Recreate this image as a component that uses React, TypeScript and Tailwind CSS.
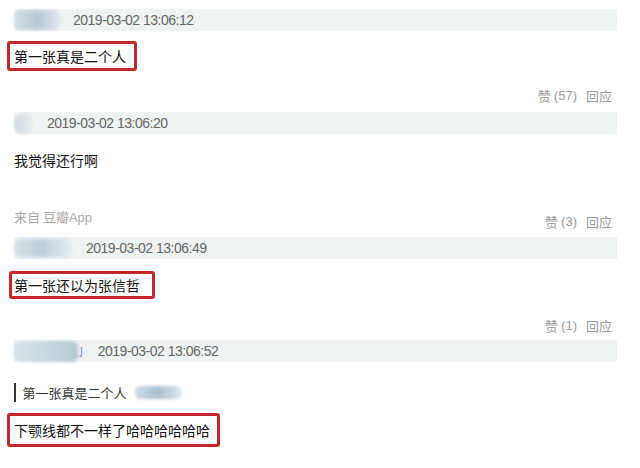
import { FC, ReactNode } from 'react';

const cjk = { fontFamily: '"Noto Sans CJK SC", "Liberation Sans", sans-serif' };
const latin = { fontFamily: '"Liberation Sans", "Noto Sans CJK SC", sans-serif' };

const Blur: FC<{ className: string }> = ({ className }) => (
  <div className={`blur-[1.5px] rounded-[6px] ${className}`} />
);

const Bar: FC<{ children: ReactNode; mt: string }> = ({ children, mt }) => (
  <div className={`flex items-center h-[22px] w-[603px] bg-[#eff3f2] ${mt}`}>{children}</div>
);

const Date: FC<{ text: string; ml: string }> = ({ text, ml }) => (
  <span style={latin} className={`text-[14px] tracking-[-0.5px] text-[#666] ${ml}`}>
    {text}
  </span>
);

const Actions: FC<{ n: number; className?: string }> = ({ n, className }) => (
  <div style={cjk} className={`flex justify-end w-[598px] text-[13px] leading-[18px] text-[#999] ${className ?? ''}`}>
    <span>赞</span>
    <span style={latin} className="ml-[3px]">({n})</span>
    <span className="ml-[9px]">回应</span>
  </div>
);

const Boxed: FC<{ children: ReactNode; className: string }> = ({ children, className }) => (
  <div
    style={cjk}
    className={`flex items-center border-[3px] border-[#c4262c] rounded-[3px] text-[14px] text-[#111] ${className}`}
  >
    {children}
  </div>
);

const App: FC = () => {
  return (
    <div className="w-[640px] h-[468px] bg-white pl-[14px] pt-[9px] overflow-hidden">
      <Bar mt="mt-0">
        <Blur className="w-[46px] h-[20px] bg-gradient-to-r from-[#d6e0e7] via-[#b5c9d6] to-[#e0e8ed]" />
        <Date text="2019-03-02 13:06:12" ml="ml-[13px]" />
      </Bar>

      <Boxed className="mt-[10px] -ml-[7px] w-[130px] h-[30px] pl-[4px]">第一张真是二个人</Boxed>

      <Actions n={57} className="mt-[16px]" />

      <Bar mt="mt-[7px]">
        <Blur className="w-[19px] h-[21px] rounded-full bg-gradient-to-r from-[#cfdbe0] to-[#e8eff1]" />
        <Date text="2019-03-02 13:06:20" ml="ml-[14px]" />
      </Bar>

      <div style={cjk} className="mt-[16px] h-[20px] leading-[20px] text-[14px] text-[#111]">我觉得还行啊</div>

      <div className="mt-[38px] flex items-start w-[598px] h-[23px]">
        <span style={cjk} className="text-[13px] leading-[18px] text-[#aaa]">
          来自 豆瓣<span style={latin}>App</span>
        </span>
        <div className="ml-auto mt-[5px]">
          <Actions n={3} className="w-auto" />
        </div>
      </div>

      <Bar mt="mt-[6px]">
        <Blur className="w-[58px] h-[18px] bg-gradient-to-r from-[#d8e2e9] via-[#bccfdb] to-[#e6edf1]" />
        <Date text="2019-03-02 13:06:49" ml="ml-[14px]" />
      </Bar>

      <Boxed className="mt-[12px] -ml-[5px] w-[146px] h-[28px] pl-[2px]">第一张还以为张信哲</Boxed>

      <Actions n={1} className="mt-[18px]" />

      <Bar mt="mt-[5px]">
        <Blur className="w-[64px] h-[21px] bg-gradient-to-r from-[#d8e3e9] via-[#c8d8e1] to-[#b4cad6]" />
        <span className="ml-[2px] text-[10px] text-[#5b8fc0]">J</span>
        <Date text="2019-03-02 13:06:52" ml="ml-[15px]" />
      </Bar>

      <div className="mt-[21px] flex items-center h-[19px]">
        <div className="w-[1.5px] h-[19px] bg-[#333]" />
        <span style={cjk} className="ml-[7px] text-[13px] text-[#333]">第一张真是二个人</span>
        <Blur className="ml-[8px] w-[47px] h-[13px] rounded-[3px] bg-gradient-to-r from-[#cfdce6] via-[#a9c0d2] to-[#e0e8ee]" />
      </div>

      <Boxed className="mt-[11px] -ml-[7px] w-[213px] h-[34px] pl-[4px]">下颚线都不一样了哈哈哈哈哈哈</Boxed>
    </div>
  );
};

export default App;
